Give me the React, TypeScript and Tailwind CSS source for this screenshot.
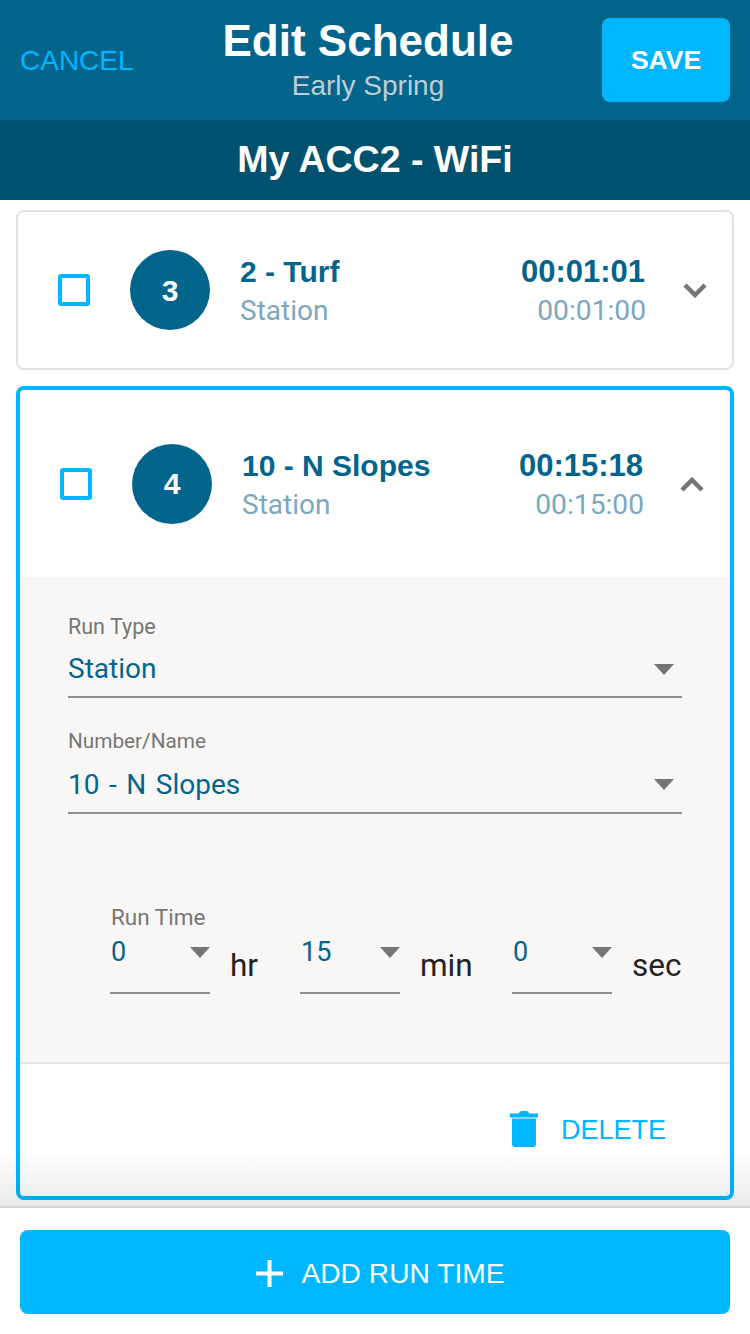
const sans = 'font-["Liberation_Sans",Arial,sans-serif]'
const roboto = 'font-["Roboto",sans-serif]'

function Checkbox() {
  return <div className="w-8 h-8 shrink-0 border-4 border-[#00b6ff] rounded-[3px]" />
}

function Chevron({ up }: { up?: boolean }) {
  return (
    <svg width="24" height="16" viewBox="0 0 24 16" className="shrink-0">
      <path
        d={up ? 'M2 14 L12 4 L22 14' : 'M2 3 L12 13 L22 3'}
        fill="none"
        stroke="#767676"
        strokeWidth="4.5"
      />
    </svg>
  )
}

function RowHead({ order, name, total, time, up }: { order: string; name: string; total: string; time: string; up?: boolean }) {
  return (
    <div className="flex items-center">
      <Checkbox />
      <div className={`w-20 h-20 ml-10 shrink-0 rounded-full bg-[#03658c] text-white flex items-center justify-center text-[30px] font-bold ${sans}`}>
        {order}
      </div>
      <div className="ml-[30px] flex-1 mt-[2px]">
        <div className={`text-[30px] leading-[39px] font-bold text-[#03658c] ${sans}`}>{name}</div>
        <div className={`text-[28px] leading-[39px] text-[#7ba7bf] ${roboto}`}>{total}</div>
      </div>
      <div className="text-right mt-[2px]">
        <div className={`text-[31px] leading-[39px] font-bold text-[#03658c] ${sans}`}>{time}</div>
        <div className={`text-[28.2px] leading-[39px] -mr-px text-[#7ba7bf] ${roboto}`}>{time.slice(0, 6) + '00'}</div>
      </div>
      <div className={`w-[62px] flex ${up ? 'justify-end pr-[1px]' : 'justify-end'}`}>
        <Chevron up={up} />
      </div>
    </div>
  )
}

function Arrow({ className }: { className?: string }) {
  return <div className={`w-0 h-0 border-x-[10px] border-x-transparent border-t-[11px] border-t-[#767676] ${className ?? ''}`} />
}

function TimeSelect({ value, unit, width }: { value: string; unit: string; width: string }) {
  return (
    <div className="flex items-end">
      <div className="w-[100px] h-[65px] border-b-2 border-[#8f8f8f] flex justify-between items-start pt-[7px] pl-[1px]">
        <span className="text-[27px] leading-[32px] text-[#03658c]">{value}</span>
        <Arrow className="mt-[11px]" />
      </div>
      <span className={`${width} ml-[20px] text-[31.5px] leading-[44px] mb-[6px] text-[#222]`}>{unit}</span>
    </div>
  )
}

export default function App() {
  return (
    <div className={`w-[750px] h-[1334px] flex flex-col bg-white overflow-hidden ${roboto}`}>
      <div className={`h-[120px] shrink-0 bg-[#03658c] flex items-center px-5 ${sans}`}>
        <span className="text-[28px] text-[#00b6ff] w-[198px] mt-[2px]">CANCEL</span>
        <div className="w-[300px] flex flex-col items-center">
          <div className="text-[44px] leading-[50px] font-bold text-white">Edit Schedule</div>
          <div className="text-[28px] leading-[36px] mt-[2px] text-[#bccfd9]">Early Spring</div>
        </div>
        <div className="ml-auto w-[128px] h-[84px] pt-[2px] rounded-lg bg-[#00b6ff] text-white font-bold text-[26.5px] flex items-center justify-center">
          SAVE
        </div>
      </div>
      <div className={`h-20 shrink-0 pb-[2px] bg-[#02526f] flex items-center justify-center text-white font-bold text-[37.5px] ${sans}`}>
        My ACC2 - WiFi
      </div>

      <div className="relative flex-1 min-h-0 overflow-hidden pt-[10px] px-4 flex flex-col gap-4">
        <div className="h-40 shrink-0 border-2 border-[#e3e2dc] rounded-lg flex flex-col justify-center pl-[40px] pr-[25px]">
          <RowHead order="3" name="2 - Turf" total="Station" time="00:01:01" />
        </div>
        <div className="h-[814px] shrink-0 border-4 border-[#00b6ff] rounded-lg flex flex-col">
          <div className="h-[187px] shrink-0 flex flex-col justify-center pl-[40px] pr-[25px]">
            <RowHead order="4" name="10 - N Slopes" total="Station" time="00:15:18" up />
          </div>
          <div className="h-[487px] shrink-0 bg-[#f8f7f5] border-b-2 border-[#e2e2e2] px-[48px] pt-[38px]">
            <div className="text-[21.5px] leading-[24px] text-[#767676]">Run Type</div>
            <div className="flex items-center justify-between h-[59px] pt-[2px] border-b-2 border-[#8f8f8f] pr-2">
              <span className="text-[28px] text-[#03658c]">Station</span>
              <Arrow className="mt-[2px]" />
            </div>
            <div className="mt-[31px] text-[20.75px] leading-[24px] text-[#767676]">Number/Name</div>
            <div className="flex items-center justify-between h-[61px] pt-[4px] border-b-2 border-[#8f8f8f] pr-2">
              <span className="text-[28px] [word-spacing:2.6px] text-[#03658c]">10 - N Slopes</span>
              <Arrow />
            </div>
            <div className="mt-[91px] pl-[42px]">
              <div className="pl-[1px] text-[22.5px] leading-[24px] text-[#767676]">Run Time</div>
              <div className="flex">
                <TimeSelect value="0" unit="hr" width="w-[70px]" />
                <TimeSelect value="15" unit="min" width="w-[92px]" />
                <TimeSelect value="0" unit="sec" width="w-[60px]" />
              </div>
            </div>
          </div>
          <div className="flex-1 flex items-center justify-end pr-[64px]">
            <svg width="28" height="36" viewBox="0 0 28 36" className="text-[#00b6ff] mb-[2px]" fill="currentColor">
              <path d="M9 2.5 Q9 0 12 0 H16 Q19 0 19 2.5 H28 V6.5 H0 V2.5 Z" />
              <path d="M2 7.5 H26 V33 Q26 36 23 36 H5 Q2 36 2 33 Z" />
            </svg>
            <span className={`ml-[23px] text-[27px] text-[#00b6ff] ${sans}`}>DELETE</span>
          </div>
        </div>
        <div className="absolute left-0 right-0 bottom-0 h-[56px] bg-gradient-to-b from-transparent to-black/8 pointer-events-none" />
      </div>

      <div className={`shrink-0 h-[128px] border-t-2 border-[#d4d2d6] px-5 pt-[22px] ${sans}`}>
        <div className="h-[84px] pl-[10px] pt-[2px] rounded-lg bg-[#00b6ff] text-white flex items-center justify-center gap-[17px] text-[28.2px]">
          <svg width="29" height="29" viewBox="0 0 29 29" fill="none" stroke="currentColor" strokeWidth="4">
            <path d="M14.5 1 V28 M1 14.5 H28" />
          </svg>
          <span>ADD RUN TIME</span>
        </div>
      </div>
    </div>
  )
}
